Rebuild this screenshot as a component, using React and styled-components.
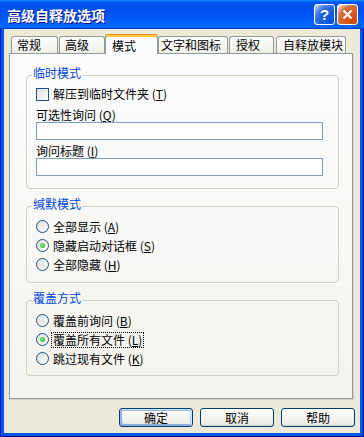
import React from "react";
import styled, { createGlobalStyle } from "styled-components";

const GlobalStyle = createGlobalStyle`
  html, body { margin: 0; padding: 0; }
  body {
    font-family: "Noto Sans CJK SC", "Liberation Sans", sans-serif;
    font-size: 12px;
    color: #000;
  }
`;

const Frame = styled.div`
  width: 364px;
  height: 437px;
  display: flex;
  flex-direction: column;
  background: #0055ea;
  box-shadow: inset 1px 0 #0019cf, inset -1px 0 #00138c, inset 0 -1px #00138c;
`;

const TitleBar = styled.div`
  height: 29px;
  flex-shrink: 0;
  display: flex;
  align-items: center;
  padding: 0 6px 0 7px;
  background: linear-gradient(180deg, #0997ff, #0053ee 8%, #0050ee 40%, #0066ff 88%, #0066ff 93%, #005bff 95%, #003dd7 96%, #003dd7);
  color: #fff;
`;

const Title = styled.div`
  font-size: 14px;
  font-weight: bold;
  letter-spacing: 0;
  text-shadow: 1px 1px #0f1089;
`;

const Controls = styled.div`
  margin-left: auto;
  display: flex;
  gap: 2px;
`;

const CtrlButton = styled.div`
  box-sizing: border-box;
  width: 21px;
  height: 21px;
  border: 1px solid #fff;
  border-radius: 3px;
  display: flex;
  align-items: center;
  justify-content: center;
  color: #fff;
  font: bold 15px "Liberation Sans", sans-serif;
  background: ${(p) =>
    p.$close
      ? "radial-gradient(circle at 90% 90%, #cc4600 0%, #dc6527 55%, #cd7546 70%, #ffccb2 90%, #fff 100%)"
      : "radial-gradient(circle at 90% 90%, #0054e9 0%, #2263d5 55%, #4479e4 70%, #a3bbec 90%, #fff 100%)"};
`;

const Client = styled.div`
  flex: 1;
  margin: 0 4px 4px;
  background: #ece9d8;
  display: flex;
  flex-direction: column;
  padding-top: 5px;
`;

const TabStrip = styled.div`
  height: 19px;
  display: flex;
  align-items: flex-end;
  padding-left: 7px;
`;

const Tab = styled.div`
  box-sizing: border-box;
  position: relative;
  width: ${(p) => p.$w}px;
  margin-left: ${(p) => p.$ml}px;
  padding-left: ${(p) => p.$pl}px;
  height: ${(p) => (p.$active ? 20 : 17)}px;
  margin-bottom: ${(p) => (p.$active ? -1 : 0)}px;
  z-index: ${(p) => (p.$active ? 2 : 1)};
  display: flex;
  align-items: center;
  line-height: 14px;
  white-space: nowrap;
  border: 1px solid #919b9c;
  border-bottom: none;
  border-radius: 3px 3px 0 0;
  border-top-color: ${(p) => (p.$active ? "#e68b2c" : "#919b9c")};
  padding-top: ${(p) => (p.$active ? 2 : 0)}px;
  background: ${(p) =>
    p.$active ? "#fcfcfe" : "linear-gradient(180deg, #fff 0%, #fafaf9 26%, #f0f0ea 95%, #ecebe6 100%)"};
  box-shadow: ${(p) => (p.$active ? "inset 0 2px #ffc83c" : "none")};
`;

const Panel = styled.div`
  flex: 1;
  margin: 0 7px 0 5px;
  border: 1px solid #919b9c;
  background: linear-gradient(180deg, #fcfcfe, #f4f3ee);
  box-shadow: 1px 1px 0 #d6d2c2;
  padding: 12px 13px 0 16px;
  display: flex;
  flex-direction: column;
  gap: 8px;
`;

const Group = styled.fieldset`
  margin: 0;
  min-width: 0;
  border: 1px solid #d0d0bf;
  border-radius: 4px;
  padding: 2px 15px ${(p) => p.$pb}px 9px;
`;

const Legend = styled.legend`
  color: #0046d5;
  font-size: 12px;
  line-height: 14px;
  padding: 0 1px 4px;
  margin-left: -4px;
`;

const Row = styled.div`
  height: ${(p) => p.$h}px;
  display: flex;
  align-items: center;
  line-height: 14px;
  white-space: nowrap;
`;

const Label = styled.div`
  line-height: 14px;
  margin-top: ${(p) => p.$mt}px;
`;

const TextBox = styled.input`
  display: block;
  box-sizing: border-box;
  width: 100%;
  height: 18px;
  margin: 0;
  border: 1px solid #7f9db9;
  background: #fff;
  outline: none;
`;

const CheckBox = styled.span`
  box-sizing: border-box;
  width: 13px;
  height: 13px;
  margin-right: 3px;
  flex-shrink: 0;
  border: 1px solid #1c5180;
  background: linear-gradient(135deg, #dcdcd7 0%, #fff 100%);
`;

const Radio = styled.span`
  box-sizing: border-box;
  width: 13px;
  height: 13px;
  margin-right: 3px;
  flex-shrink: 0;
  border: 1px solid #1c5180;
  border-radius: 50%;
  background: linear-gradient(135deg, #dcdcd7 0%, #fff 100%);
  display: flex;
  align-items: center;
  justify-content: center;
`;

const Dot = styled.span`
  width: 5px;
  height: 5px;
  border-radius: 50%;
  background: radial-gradient(circle at 40% 40%, #8ee88a, #21a121);
`;

const OptionText = styled.span`
  padding: 0 1px;
  outline: ${(p) => (p.$focus ? "1px dotted #000" : "none")};
`;

const ButtonRow = styled.div`
  display: flex;
  justify-content: flex-end;
  gap: 7px;
  padding: 9px 5px 6px 0;
`;

const Button = styled.button`
  box-sizing: border-box;
  width: 74px;
  height: 19px;
  padding: 0;
  border: 1px solid #003c74;
  border-radius: 3px;
  background: linear-gradient(180deg, #fff, #ecebe6 86%, #d6d0c5);
  font-family: "Noto Sans CJK SC", sans-serif;
  font-size: 12px;
  line-height: 14px;
  color: #000;
  box-shadow: ${(p) =>
    p.$default
      ? "inset -1px 1px #cee7ff, inset 1px 2px #98b8ea, inset -2px 2px #bcd4f6, inset 1px -1px #89ade4, inset 2px -2px #89ade4"
      : "none"};
`;

const tabs = [
  { label: "常规", w: 47, ml: 0, pl: 5 },
  { label: "高级", w: 46, ml: 1, pl: 5 },
  { label: "模式", w: 53, ml: 0, pl: 6, active: true },
  { label: "文字和图标", w: 70, ml: 0, pl: 2 },
  { label: "授权", w: 45, ml: 1, pl: 6 },
  { label: "自释放模块", w: 70, ml: 2, pl: 6 },
];

function Option({ children, k, checked, focus }) {
  return (
    <Row $h={19}>
      <Radio>{checked && <Dot />}</Radio>
      <OptionText $focus={focus}>
        {children} (<u>{k}</u>)
      </OptionText>
    </Row>
  );
}

export default function App() {
  return (
    <>
      <GlobalStyle />
      <Frame>
        <TitleBar>
          <Title>高级自释放选项</Title>
          <Controls>
            <CtrlButton>?</CtrlButton>
            <CtrlButton $close>
              <svg width="11" height="11" viewBox="0 0 11 11">
                <path d="M1.5 1.5 L9.5 9.5 M9.5 1.5 L1.5 9.5" stroke="#fff" strokeWidth="2.2" />
              </svg>
            </CtrlButton>
          </Controls>
        </TitleBar>
        <Client>
          <TabStrip>
            {tabs.map((t) => (
              <Tab key={t.label} $w={t.w} $ml={t.ml} $pl={t.pl} $active={t.active}>
                {t.label}
              </Tab>
            ))}
          </TabStrip>
          <Panel>
            <Group $pb={12}>
              <Legend>临时模式</Legend>
              <Row $h={16}>
                <CheckBox />
                <OptionText>
                  解压到临时文件夹 (<u>T</u>)
                </OptionText>
              </Row>
              <Label $mt={6}>
                可选性询问 (<u>Q</u>)
              </Label>
              <TextBox />
              <Label $mt={4}>
                询问标题 (<u>I</u>)
              </Label>
              <TextBox />
            </Group>
            <Group $pb={8}>
              <Legend>缄默模式</Legend>
              <Option k="A">全部显示</Option>
              <Option k="S" checked>
                隐藏启动对话框
              </Option>
              <Option k="H">全部隐藏</Option>
            </Group>
            <Group $pb={7}>
              <Legend>覆盖方式</Legend>
              <Option k="B">覆盖前询问</Option>
              <Option k="L" checked focus>
                覆盖所有文件
              </Option>
              <Option k="K">跳过现有文件</Option>
            </Group>
          </Panel>
          <ButtonRow>
            <Button $default>确定</Button>
            <Button>取消</Button>
            <Button>帮助</Button>
          </ButtonRow>
        </Client>
      </Frame>
    </>
  );
}
